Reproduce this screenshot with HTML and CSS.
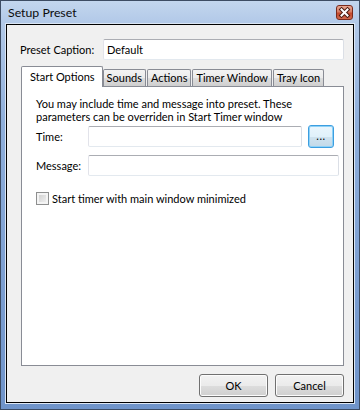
FILE: index.html
```html
<!DOCTYPE html>
<html>
<head>
<meta charset="utf-8">
<link rel="stylesheet" href="styles.css">
</head>
<body>
<div class="window">
  <div class="titlebar">
    <span class="title">Setup Preset</span>
    <span class="close">
      <svg width="15" height="13" viewBox="0 0 15 13">
        <path d="M4.5 3.5 L10.5 9.5 M10.5 3.5 L4.5 9.5" stroke="#4a1a10" stroke-width="4" stroke-linecap="square" fill="none"/>
        <path d="M4.5 3.5 L10.5 9.5 M10.5 3.5 L4.5 9.5" stroke="#ffffff" stroke-width="2" stroke-linecap="square" fill="none"/>
      </svg>
    </span>
  </div>
  <div class="client">
    <div class="caption-row">
      <span class="caption-label">Preset Caption:</span>
      <div class="textbox caption-input">Default</div>
    </div>
    <div class="tabs">
      <div class="tab selected">Start Options</div>
      <div class="tab">Sounds</div>
      <div class="tab">Actions</div>
      <div class="tab">Timer Window</div>
      <div class="tab">Tray Icon</div>
    </div>
    <div class="panel">
      <p class="info">You may include time and message into preset. These<br>parameters can be overriden in Start Timer window</p>
      <div class="field-row time-row">
        <span class="field-label">Time:</span>
        <div class="textbox field-input"></div>
        <span class="btn browse">...</span>
      </div>
      <div class="field-row message-row">
        <span class="field-label">Message:</span>
        <div class="textbox field-input"></div>
      </div>
      <div class="check-row">
        <span class="checkbox"></span>
        <span class="check-label">Start timer with main window minimized</span>
      </div>
    </div>
    <div class="buttons">
      <span class="btn dlg-btn">OK</span>
      <span class="btn dlg-btn">Cancel</span>
    </div>
  </div>
</div>
</body>
</html>
```

FILE: styles.css
```css
html, body {
  margin: 0;
  padding: 0;
}
body {
  width: 360px;
  height: 410px;
  overflow: hidden;
  font-family: "Lato", "Open Sans", sans-serif;
  font-size: 11px;
  color: #000;
}
.window {
  box-sizing: border-box;
  width: 360px;
  height: 410px;
  border: 1px solid #3d4c63;
  padding: 0 5px 6px 5px;
  background: linear-gradient(to bottom, #c3d6ee 0px, #b2c9e8 22px, #8fafdb 120px, #7a9dd0 300px, #6f94ca 410px);
  display: flex;
  flex-direction: column;
}
.titlebar {
  height: 23px;
  display: flex;
  align-items: flex-start;
  flex: none;
}
.title {
  font-size: 12.3px;
  margin-left: 2px;
  margin-top: 3px;
  color: #0b0b0b;
  line-height: 17px;
}
.close {
  margin-left: auto;
  margin-right: 1px;
  margin-top: 4px;
  width: 15px;
  height: 13px;
  border: 1px solid #7a2a1c;
  border-radius: 3px;
  background: linear-gradient(to bottom, #e8a792 0%, #d77d64 45%, #c4482d 55%, #d06a4e 100%);
  display: flex;
}
.client {
  flex: 1;
  border: 1px solid #000;
  box-shadow: 0 0 0 1px #dbe6f4;
  background: #f0f0f0;
  padding: 14px 9px 5px 14px;
  display: flex;
  flex-direction: column;
}
.caption-row {
  display: flex;
  align-items: center;
  height: 21px;
}
.caption-label {
  width: 83px;
  margin-left: -1px;
  flex: none;
}
.textbox {
  box-sizing: border-box;
  background: #fff;
  border: 1px solid;
  border-color: #abadb3 #dbdfe6 #e3e9ef #e2e3ea;
  border-radius: 2px;
}
.caption-input {
  flex: 1;
  height: 21px;
  padding-left: 3px;
  line-height: 19px;
}
.tabs {
  margin-top: 6px;
  height: 20px;
  display: flex;
  align-items: flex-end;
  position: relative;
  z-index: 1;
}
.tab {
  box-sizing: border-box;
  flex: none;
  white-space: nowrap;
  height: 17px;
  border: 1px solid #898c95;
  border-bottom: none;
  border-radius: 2px 2px 0 0;
  background: linear-gradient(to bottom, #f3f3f3 0%, #ebebeb 50%, #dddddd 51%, #cfcfcf 100%);
  padding: 0 3px;
  line-height: 16px;
  text-align: center;
}
.tab + .tab {
  margin-left: 1px;
}
.tab.selected + .tab {
  margin-left: 0;
}
.tab.selected {
  height: 21px;
  background: #fff;
  margin-bottom: -1px;
  padding: 0 7px 0 8px;
  line-height: 19px;
}
.panel {
  flex: 1;
  background: #fff;
  border: 1px solid #898c95;
  padding: 10px 4px 0 14px;
}
.info {
  margin: 0;
  line-height: 13px;
  white-space: nowrap;
}
.field-row {
  display: flex;
  align-items: center;
}
.time-row {
  margin-top: 2px;
  height: 23px;
}
.message-row {
  margin-top: 6px;
  height: 22px;
}
.field-label {
  width: 52px;
  flex: none;
}
.field-input {
  flex: 1;
  height: 21px;
}
.time-row .field-input {
  margin-right: 6px;
}
.btn {
  box-sizing: border-box;
  display: flex;
  align-items: center;
  justify-content: center;
  border: 1px solid #707070;
  border-radius: 3px;
  background: linear-gradient(to bottom, #f2f2f2 0%, #ebebeb 50%, #dddddd 51%, #cfcfcf 100%);
  box-shadow: inset 0 0 0 1px #fcfcfc;
}
.browse {
  width: 26px;
  height: 23px;
  flex: none;
  border-color: #3c9ee0;
  background: linear-gradient(to bottom, #eaf6fd 0%, #e0f1fb 50%, #cfe3f0 51%, #c3d9e8 100%);
  box-shadow: inset 0 0 0 1px #8dd1f7;
  padding-bottom: 3px;
  letter-spacing: 0.5px;
  margin-right: 5px;
}
.check-row {
  margin-top: 16px;
  display: flex;
  align-items: center;
  height: 13px;
}
.checkbox {
  box-sizing: border-box;
  width: 13px;
  height: 13px;
  border: 1px solid #8e8f8f;
  background: linear-gradient(135deg, #cbcbcb 0%, #f6f6f6 100%);
  box-shadow: inset 0 0 0 2px #f4f4f4;
  flex: none;
}
.check-label {
  margin-left: 3px;
}
.buttons {
  margin-top: 8px;
  display: flex;
  justify-content: flex-end;
  gap: 7px;
}
.dlg-btn {
  width: 69px;
  height: 23px;
}
```
